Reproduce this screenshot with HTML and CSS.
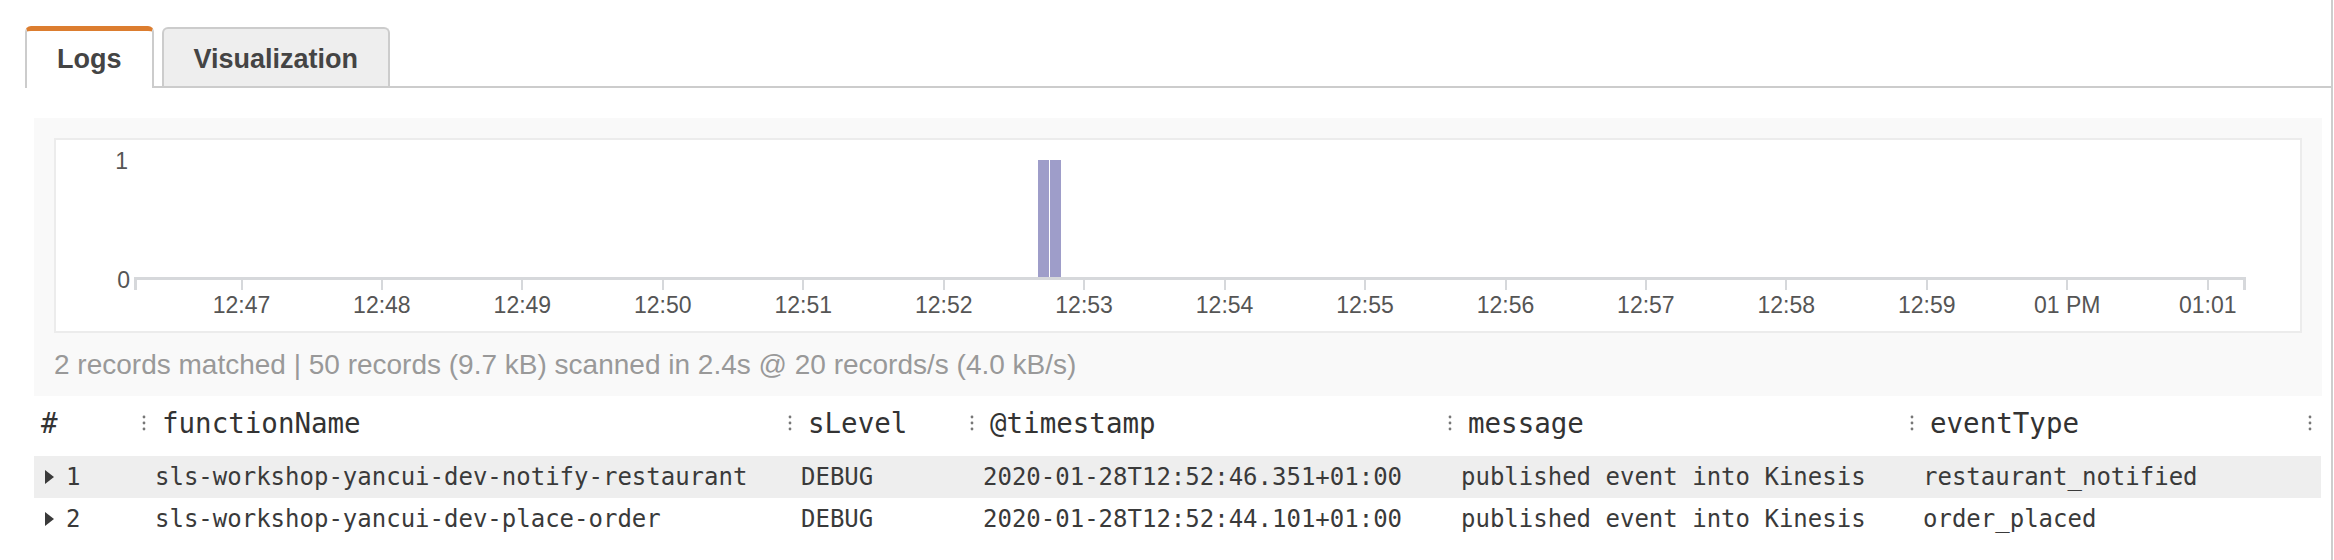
FILE: index.html
```html
<!DOCTYPE html>
<html>
<head>
<meta charset="utf-8">
<title>Logs Insights</title>
<link rel="stylesheet" href="styles.css">
</head>
<body>
<div class="page">
  <div class="tabs">
    <div class="tab active">Logs</div>
    <div class="tab">Visualization</div>
  </div>

  <div class="panel">
    <div class="chart">
      <svg class="chart-svg" width="2244" height="191" viewBox="0 0 2244 191">
        <g transform="translate(-56,-140)">
          <text class="ylab" x="128" y="168.5">1</text>
          <text class="ylab" x="130" y="288">0</text>
          <rect class="bar" x="1038" y="160" width="11" height="118"/>
          <rect class="bar" x="1050" y="160" width="11" height="118"/>
          <rect class="axis" x="134" y="277" width="2112" height="3"/>
          <rect class="axis" x="134" y="277" width="3" height="13"/>
          <rect class="axis" x="2243" y="277" width="3" height="13"/>
          <g class="ticks">
            <rect x="241" y="280" width="2" height="10"/>
            <rect x="381" y="280" width="2" height="10"/>
            <rect x="521" y="280" width="2" height="10"/>
            <rect x="662" y="280" width="2" height="10"/>
            <rect x="802" y="280" width="2" height="10"/>
            <rect x="943" y="280" width="2" height="10"/>
            <rect x="1083" y="280" width="2" height="10"/>
            <rect x="1224" y="280" width="2" height="10"/>
            <rect x="1364" y="280" width="2" height="10"/>
            <rect x="1505" y="280" width="2" height="10"/>
            <rect x="1645" y="280" width="2" height="10"/>
            <rect x="1785" y="280" width="2" height="10"/>
            <rect x="1926" y="280" width="2" height="10"/>
            <rect x="2066" y="280" width="2" height="10"/>
            <rect x="2207" y="280" width="2" height="10"/>
          </g>
          <g class="xlab">
            <text x="241.5" y="312.5">12:47</text>
            <text x="381.9" y="312.5">12:48</text>
            <text x="522.4" y="312.5">12:49</text>
            <text x="662.8" y="312.5">12:50</text>
            <text x="803.3" y="312.5">12:51</text>
            <text x="943.7" y="312.5">12:52</text>
            <text x="1084.1" y="312.5">12:53</text>
            <text x="1224.6" y="312.5">12:54</text>
            <text x="1365" y="312.5">12:55</text>
            <text x="1505.5" y="312.5">12:56</text>
            <text x="1645.9" y="312.5">12:57</text>
            <text x="1786.3" y="312.5">12:58</text>
            <text x="1926.8" y="312.5">12:59</text>
            <text x="2067.2" y="312.5">01 PM</text>
            <text x="2207.7" y="312.5">01:01</text>
          </g>
        </g>
      </svg>
    </div>
    <div class="summary">2 records matched | 50 records (9.7 kB) scanned in 2.4s @ 20 records/s (4.0 kB/s)</div>
  </div>

  <div class="table">
    <div class="thead">
      <div class="hcell first">#</div>
      <div class="hcell"><svg class="sep" width="4" height="16" viewBox="0 0 4 16"><circle cx="2" cy="2" r="1.4"/><circle cx="2" cy="8" r="1.4"/><circle cx="2" cy="14" r="1.4"/></svg><span>functionName</span></div>
      <div class="hcell"><svg class="sep" width="4" height="16" viewBox="0 0 4 16"><circle cx="2" cy="2" r="1.4"/><circle cx="2" cy="8" r="1.4"/><circle cx="2" cy="14" r="1.4"/></svg><span>sLevel</span></div>
      <div class="hcell"><svg class="sep" width="4" height="16" viewBox="0 0 4 16"><circle cx="2" cy="2" r="1.4"/><circle cx="2" cy="8" r="1.4"/><circle cx="2" cy="14" r="1.4"/></svg><span>@timestamp</span></div>
      <div class="hcell"><svg class="sep" width="4" height="16" viewBox="0 0 4 16"><circle cx="2" cy="2" r="1.4"/><circle cx="2" cy="8" r="1.4"/><circle cx="2" cy="14" r="1.4"/></svg><span>message</span></div>
      <div class="hcell"><svg class="sep" width="4" height="16" viewBox="0 0 4 16"><circle cx="2" cy="2" r="1.4"/><circle cx="2" cy="8" r="1.4"/><circle cx="2" cy="14" r="1.4"/></svg><span>eventType</span><svg class="sep end" width="4" height="16" viewBox="0 0 4 16"><circle cx="2" cy="2" r="1.4"/><circle cx="2" cy="8" r="1.4"/><circle cx="2" cy="14" r="1.4"/></svg></div>
    </div>
    <div class="row odd">
      <div class="cell first"><svg class="arrow" width="9" height="14" viewBox="0 0 9 14"><path d="M0 0 L9 7 L0 14 Z"/></svg><span>1</span></div>
      <div class="cell">sls-workshop-yancui-dev-notify-restaurant</div>
      <div class="cell">DEBUG</div>
      <div class="cell">2020-01-28T12:52:46.351+01:00</div>
      <div class="cell">published event into Kinesis</div>
      <div class="cell">restaurant_notified</div>
    </div>
    <div class="row">
      <div class="cell first"><svg class="arrow" width="9" height="14" viewBox="0 0 9 14"><path d="M0 0 L9 7 L0 14 Z"/></svg><span>2</span></div>
      <div class="cell">sls-workshop-yancui-dev-place-order</div>
      <div class="cell">DEBUG</div>
      <div class="cell">2020-01-28T12:52:44.101+01:00</div>
      <div class="cell">published event into Kinesis</div>
      <div class="cell">order_placed</div>
    </div>
  </div>
</div>
</body>
</html>
```

FILE: styles.css
```css
html, body {
  margin: 0;
  padding: 0;
  background: #fff;
}

.page {
  width: 2331px;
  height: 560px;
  border-right: 2px solid #cdcdcd;
  overflow: hidden;
  font-family: "Liberation Sans", Arial, sans-serif;
}

/* Tabs */
.tabs {
  display: flex;
  align-items: flex-end;
  gap: 8px;
  margin: 26px 0 0 25px;
  border-bottom: 2px solid #cccccc;
}

.tab {
  font-size: 27px;
  font-weight: bold;
  color: #444;
  line-height: 30px;
  padding: 15px 30px 12px;
  border: 2px solid #cccccc;
  border-bottom: none;
  border-radius: 6px 6px 0 0;
  background: #eeeeee;
}

.tab.active {
  background: #fff;
  border-top: 5px solid #dc7d2f;
  padding-top: 13px;
  padding-bottom: 14px;
  margin-bottom: -2px;
}

/* Chart panel */
.panel {
  margin: 30px 9px 0 34px;
  background: #f9f9f9;
  padding: 20px 20px 16px;
}

.chart {
  height: 191px;
  border: 2px solid #ececec;
  background: #fff;
}

.chart-svg {
  display: block;
}

.ylab {
  font-family: "Liberation Sans", Arial, sans-serif;
  font-size: 23px;
  fill: #555;
  text-anchor: end;
}

.xlab text {
  font-family: "Liberation Sans", Arial, sans-serif;
  font-size: 23px;
  fill: #555;
  text-anchor: middle;
}

.bar {
  fill: #9e9dc9;
}

.axis,
.ticks rect {
  fill: #d6d8db;
}

.summary {
  margin-top: 17px;
  font-size: 28px;
  line-height: 30px;
  color: #999;
  white-space: nowrap;
}

/* Results table */
.table {
  margin: 0 10px 0 34px;
  font-family: "DejaVu Sans Mono", "Liberation Mono", monospace;
}

.thead,
.row {
  display: grid;
  grid-template-columns: 108px 646px 182px 478px 462px 1fr;
  align-items: center;
}

.thead {
  height: 54px;
  padding-bottom: 6px;
  font-size: 27.5px;
  color: #333;
}

.hcell {
  display: flex;
  align-items: center;
  gap: 16px;
  white-space: nowrap;
}

.hcell.first {
  padding-left: 7px;
}

.sep {
  flex: none;
  fill: #777;
}

.sep.end {
  margin-left: auto;
  margin-right: 9px;
}

.row {
  height: 42px;
  font-size: 24px;
  color: #3a3a3a;
}

.row.odd {
  background: #eeeeee;
}

.cell {
  padding-left: 13px;
  white-space: nowrap;
}

.cell.first {
  display: flex;
  align-items: center;
  gap: 12px;
  padding-left: 11px;
}

.arrow {
  fill: #3a3a3a;
  flex: none;
}
```
